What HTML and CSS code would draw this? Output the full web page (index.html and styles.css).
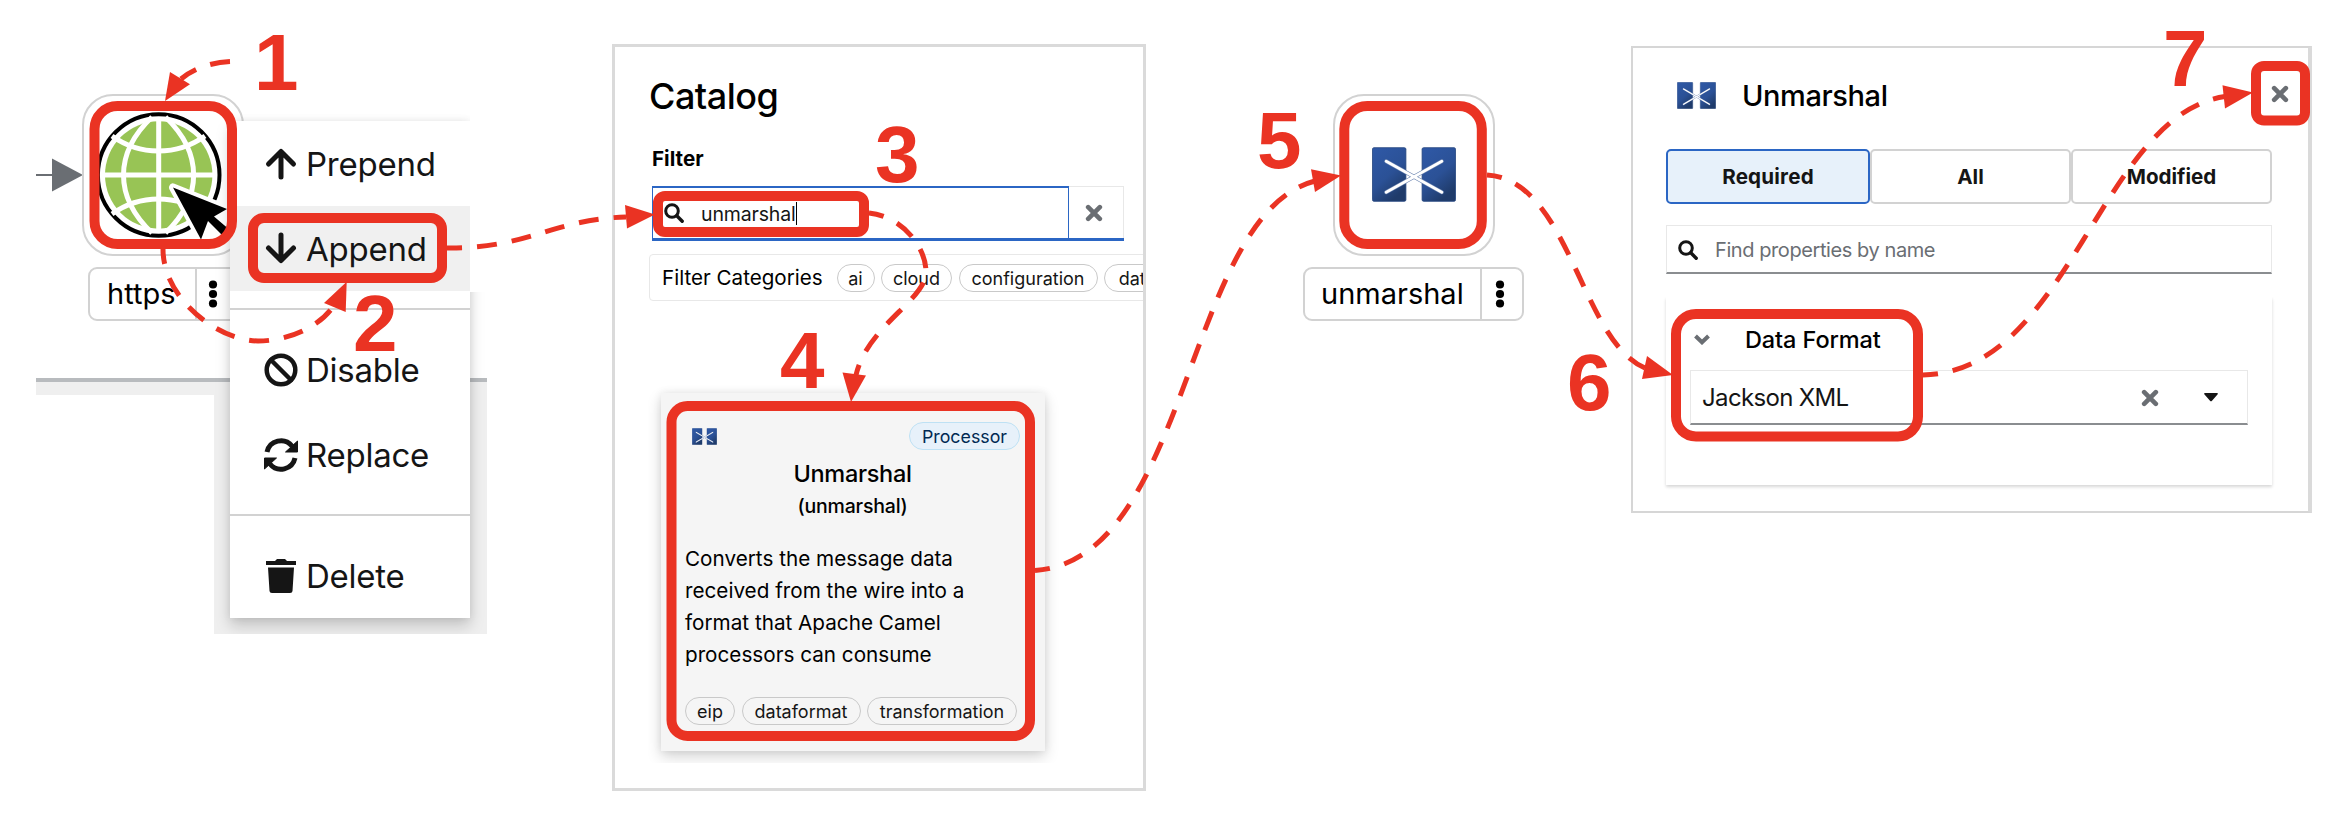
FILE: index.html
```
<!DOCTYPE html>
<html lang="en">
<head>
<meta charset="utf-8">
<title>Add an Unmarshal step</title>
<link rel="stylesheet" href="styles.css">
</head>
<body>
<svg width="0" height="0" class="defs">
  <defs>
    <linearGradient id="blue" x1="0" y1="0" x2="0.55" y2="1">
      <stop offset="0" stop-color="#2f59a7"/><stop offset="0.6" stop-color="#2b5196"/><stop offset="1" stop-color="#1f3b6a"/>
    </linearGradient>
    <symbol id="camel" viewBox="0 0 83 54">
      <rect x="0.5" y="0.5" width="33" height="53" rx="1.5" fill="url(#blue)" stroke="#24457f" stroke-width=".8"/>
      <rect x="49.500" y="0.5" width="33" height="53" rx="1.5" fill="url(#blue)" stroke="#24457f" stroke-width=".8"/>
      <path d="M14 14 69 44.500M14 44.500 69 14" stroke="#6b84b0" stroke-width="4" stroke-linecap="round"/>
      <path d="M14 14 69 44.500M14 44.500 69 14" stroke="#fff" stroke-width="2.800" stroke-linecap="round"/>
    </symbol>
    <symbol id="times" viewBox="0 0 17 17"><path d="M3 3 14 14M14 3 3 14" stroke="currentColor" stroke-width="4.400" stroke-linecap="round"/></symbol>
    <symbol id="search" viewBox="0 0 20 20"><circle cx="8" cy="8" r="6.300" fill="none" stroke="currentColor" stroke-width="3"/><path d="m12.800 12.800 5.400 5.400" stroke="currentColor" stroke-width="3.400" stroke-linecap="round"/></symbol>
    <symbol id="dots" viewBox="0 0 10 28"><circle cx="5" cy="4.500" r="4.100"/><circle cx="5" cy="14" r="4.100"/><circle cx="5" cy="23.500" r="4.100"/></symbol>
  </defs>
</svg>
<main class="canvas">

  <section class="pipeline">
    <div class="lane"></div>
    <div class="lane-bottom"></div>
    <div class="lane-edge"></div>
    <svg class="flow-arrow" width="47" height="34" viewBox="0 0 47 34"><path d="M0 17H17" stroke="#6a6e73" stroke-width="2"/><path d="M16 .5 47 17 16 33.500z" fill="#6a6e73"/></svg>
    <div class="node node-https">
      <svg width="150" height="150" viewBox="84 99 150 150">
        <circle cx="158.700" cy="174" r="60.800" fill="#fff" stroke="#000" stroke-width="4"/>
        <circle cx="158.700" cy="174" r="53.700" fill="#98c455"/>
        <g fill="none" stroke="#fff" stroke-width="5">
          <path d="M158.700 118V230M103 174H215"/>
          <path d="M152 116C114 152 114 196 152 232M165.500 116C203 152 203 196 165.500 232"/>
          <path d="M112 135C140 155 177 155 205 135M112 213C140 193 177 193 205 213"/>
        </g>
        <path d="M173 186.500 201 238 208 221 223 233 230 226 215 215 227 208z" fill="#000" stroke="#fff" stroke-width="8" stroke-linejoin="round"/>
        <path d="M173 186.500 227 208 214 215.500 231 230 224 236 208 220 201 238.500z"/>
      </svg>
    </div>
    <div class="label label-https"><span>https</span><svg width="10" height="28"><use href="#dots"/></svg></div>
    <div class="menu-clip">
      <ul class="menu">
        <li><svg viewBox="0 0 34 34"><path d="M17 30V5M4.500 17 17 4.500 29.500 17" class="ln"/></svg>Prepend</li>
        <li class="active"><svg viewBox="0 0 34 34"><path d="M17 3V28M4.500 16 17 28.500 29.500 16" class="ln"/></svg>Append</li>
        <li class="sep"></li>
        <li><svg viewBox="0 0 34 34"><circle cx="17" cy="17" r="14.300" class="ln thin"/><path d="m7 7 20 20" class="ln thin"/></svg>Disable</li>
        <li><svg viewBox="0 0 34 34"><path d="M3 14A14.300 14.300 0 0 1 28 8M31 20A14.300 14.300 0 0 1 6 26" class="ln flat"/><path d="M33.500 3V14H21.500zM.500 31V20H12.500z" class="tip"/></svg>Replace</li>
        <li class="sep"></li>
        <li><svg viewBox="0 0 34 34"><path d="M2 2H11L13 0H21L23 2H32V6H2zM4 8.500H30L28.500 32Q28.400 34 26 34H8Q5.600 34 5.500 32z"/></svg>Delete</li>
      </ul>
    </div>
  </section>

  <section class="catalog">
    <h1>Catalog</h1>
    <h2>Filter</h2>
    <div class="search">
      <div class="search-input"><svg width="20" height="20"><use href="#search"/></svg><span>unmarshal</span><i></i></div>
      <div class="search-clear"><svg width="18" height="18"><use href="#times"/></svg></div>
    </div>
    <div class="categories"><span class="cat-title">Filter Categories</span><b class="chip c-ai">ai</b><b class="chip c-cloud">cloud</b><b class="chip c-conf">configuration</b><b class="chip c-db">database</b></div>
    <div class="card-clip">
      <article class="card">
        <header><svg width="25" height="17" viewBox="0 0 83 54" preserveAspectRatio="none"><use href="#camel" width="83" height="54"/></svg><b class="chip processor">Processor</b></header>
        <h3>Unmarshal</h3>
        <h4>(unmarshal)</h4>
        <p>Converts the message data<br>received from the wire into a<br>format that Apache Camel<br>processors can consume</p>
        <footer><b class="chip c-eip">eip</b><b class="chip c-data">dataformat</b><b class="chip c-trans">transformation</b></footer>
      </article>
    </div>
  </section>

  <section class="unmarshal">
    <div class="node"><svg width="84" height="55"><use href="#camel"/></svg></div>
    <div class="label"><span>unmarshal</span><svg width="10" height="28"><use href="#dots"/></svg></div>
  </section>

  <section class="config">
    <header><svg width="39" height="27" viewBox="0 0 83 54" preserveAspectRatio="none"><use href="#camel" width="83" height="54"/></svg><h2>Unmarshal</h2><svg class="close" width="18" height="18"><use href="#times"/></svg></header>
    <nav><span class="on">Required</span><span>All</span><span>Modified</span></nav>
    <div class="find"><svg width="20" height="20"><use href="#search"/></svg><span>Find properties by name</span></div>
    <div class="group">
      <div class="group-head"><svg width="16" height="11" viewBox="0 0 16 11"><path d="M1.500 2 8 8.300 14.500 2" fill="none" stroke="#6a6e73" stroke-width="4"/></svg><h3>Data Format</h3></div>
      <div class="select"><span>Jackson XML</span><svg class="x" width="18" height="18"><use href="#times"/></svg><svg width="14" height="9" viewBox="0 0 14 9"><path d="M1 0H13Q14.500 .5 13.500 1.500L8 7.800Q7 8.800 6 7.800L.5 1.500Q-.5 .5 1 0z" fill="#151515"/></svg></div>
    </div>
  </section>

  <svg class="annotations" width="2344" height="828" viewBox="0 0 2344 828">
    <g fill="none" stroke="#ea3323" stroke-width="10">
      <rect x="94.500" y="106" width="137.500" height="138" rx="23"/>
      <rect x="253" y="218" width="189" height="60" rx="11"/>
      <rect x="658" y="196" width="206" height="36" rx="7"/>
      <rect x="671.500" y="406" width="358.500" height="330" rx="16"/>
      <rect x="1344.300" y="106" width="137.500" height="138" rx="23"/>
      <rect x="1676" y="314" width="242" height="122.500" rx="20"/>
      <rect x="2256" y="66" width="49" height="54.500" rx="8"/>
    </g>
    <g fill="none" stroke="#ea3323" stroke-width="5" stroke-dasharray="20 15" stroke-dashoffset="5">
      <path d="M230 61.500C205 62.500 188 73 181 79" stroke-dashoffset="0"/>
      <path d="M163 249C163 300 220 341 258 341C290 341 322 325 334 305"/>
      <path d="M447 248C527 249 553 219 626 217"/>
      <path d="M869 213C901 216 926 246 926 272C926 300 868 325 856 375"/>
      <path d="M1035 570.500C1190 560 1185 215 1315 181"/>
      <path d="M1487 175C1570 180 1580 340 1645 368"/>
      <path d="M1923 375C2070 372 2100 115 2225 96.500"/>
    </g>
    <g fill="#ea3323">
      <path d="M165 101 170 72 190 84.300z"/>
      <path d="M346.700 281.700 324 303 345.700 312z"/>
      <path d="M655 214.500 625 205 627 228.500z"/>
      <path d="M851 402 842.500 372.500 866 375.500z"/>
      <path d="M1341 175.500 1311 169.300 1315 192z"/>
      <path d="M1673 375 1647 356 1642 379z"/>
      <path d="M2253 92.500 2222.500 85.300 2225 108.500z"/>
    </g>
    <g class="steps">
      <text x="254" y="90">1</text>
      <text x="353" y="351">2</text>
      <text x="875" y="182">3</text>
      <text x="780" y="388">4</text>
      <text x="1257" y="168">5</text>
      <text x="1567" y="410">6</text>
      <text x="2163" y="86">7</text>
    </g>
  </svg>
</main>
</body>
</html>
```
FILE: styles.css
```
* { box-sizing: border-box; }
body { margin: 0; background: #fff; font-family: Inter, "Liberation Sans", sans-serif; color: #000; }
h1, h2, h3, h4, p, ul { margin: 0; padding: 0; font-weight: 500; }
svg { display: block; flex: none; }
.defs { position: absolute; }
.canvas { position: relative; width: 2344px; height: 828px; overflow: hidden; }
.pipeline, .catalog, .unmarshal, .config, .annotations { position: absolute; }
.pipeline { left: 0; top: 0; width: 500px; height: 640px; }
.lane, .lane-edge, .lane-bottom, .flow-arrow, .node-https, .label-https, .menu-clip { position: absolute; }
.lane-edge { left: 36px; top: 378px; width: 451px; height: 4px; background: #b8bbbe; }
.lane { left: 36px; top: 382px; width: 178px; height: 13px; background: #efefef; }
.lane-bottom { left: 214px; top: 382px; width: 273px; height: 252px; background: #efefef; }
.flow-arrow { left: 36px; top: 158px; }

.node { width: 162px; height: 162px; border: 2px solid #d2d2d2; border-radius: 31px; background: #fff; display: flex; align-items: center; justify-content: center; }
.node-https { left: 82px; top: 94px; justify-content: flex-start; }
.label { width: 221px; height: 54px; border: 2px solid #d2d2d2; border-radius: 9px; background: #fff; display: flex; align-items: center; font-size: 29px; }
.label span { width: 177px; height: 50px; line-height: 50px; padding-left: 16px; border-right: 2px solid #d2d2d2; }
.label svg { margin-left: 13px; }
.label-https { left: 88px; top: 267px; width: 156px; }
.label-https span { width: 107px; padding-left: 17px; }
.label-https svg { margin-left: 11px; }

.menu-clip { left: 214px; top: 106px; width: 273px; height: 528px; padding: 15px 17px 16px 16px; overflow: hidden; clip-path: polygon(0 0, 256px 0, 256px 186px, 100% 186px, 100% 100%, 0 100%); }
.menu { list-style: none; width: 240px; height: 497px; background: #fff; font-weight: 400; box-shadow: 0 8px 14px rgba(3,3,3,.18), 0 0 8px rgba(3,3,3,.08); }
.menu li { height: 85px; padding-left: 34px; display: flex; align-items: center; gap: 8px; font-size: 33px; letter-spacing: -.25px; color: #151515; }
.menu li svg { width: 34px; height: 34px; fill: #151515; }
.menu .active { background: #f0f0f0; }
.menu .sep { height: 2px; margin: 17px 0; padding: 0; background: #d2d2d2; }
.ln { fill: none; stroke: #151515; stroke-width: 5; stroke-linecap: round; stroke-linejoin: round; }
.ln.thin { stroke-width: 4.500; }
.ln.flat { stroke-linecap: butt; }
.tip { stroke: #151515; stroke-width: 1; stroke-linejoin: round; }

.catalog { left: 612px; top: 44px; width: 534px; height: 747px; border: 3px solid #dadada; overflow: hidden; padding: 24px 0 0 34px; display: flex; flex-direction: column; }
.catalog h1 { font-size: 36px; line-height: 50px; letter-spacing: -.5px; }
.catalog h2 { font-size: 20.600px; font-weight: 700; line-height: 26px; margin: 25px 0 0 3px; }
.search { display: flex; width: 472px; height: 55px; margin: 14px 0 0 3px; border-bottom: 3px solid #2b66c4; }
.search-input { width: 417px; border: 1px solid #2b66c4; border-top-width: 2px; border-bottom: 0; display: flex; align-items: center; padding-left: 11px; font-size: 19.500px; letter-spacing: -.15px; color: #151515; }
.search-input span { margin-left: 17px; padding-top: 1px; }
.search-input i { width: 1px; height: 23px; background: #000; }
.search-clear { flex: 1; border: 1px solid #e8e8e8; border-width: 1px 1px 0 0; display: flex; align-items: center; justify-content: center; padding-right: 4px; color: #6a6e73; }
.categories { margin-top: 13px; width: 640px; height: 47px; border: 1px solid #e8e8e8; border-radius: 4px; display: flex; align-items: center; padding-left: 12px; font-size: 20.600px; gap: 6.500px; flex: none; }
.cat-title { width: 168px; white-space: nowrap; }
.chip { height: 28px; border: 1px solid #c9c9c9; border-radius: 14px; font-weight: 400; font-size: 18px; line-height: 27px; text-align: center; color: #151515; flex: none; }
.c-ai { width: 38px; } .c-cloud { width: 71px; } .c-conf { width: 139px; } .c-db { width: 108px; }
.card-clip { margin: 76px 0 0 -1px; padding: 16px 25px 12px 13px; width: 422px; height: 386px; overflow: hidden; flex: none; }
.card { width: 384px; height: 358px; background: #f5f5f5; box-shadow: 0 6px 14px rgba(3,3,3,.16), 0 0 8px rgba(3,3,3,.08); padding: 29px 25px 0 24px; }
.card header { display: flex; justify-content: space-between; align-items: center; height: 28px; padding-left: 7px; }
.chip.processor { width: 111px; font-size: 17.800px; border-color: #bee1f4; background: #e7f1fa; color: #002952; }
.card h3 { font-size: 23.500px; line-height: 32px; letter-spacing: -.3px; text-align: center; margin-top: 8px; }
.card h4 { font-size: 19.500px; line-height: 28px; letter-spacing: -.2px; text-align: center; margin-top: 2px; }
.card p { font-size: 20.700px; line-height: 32px; font-weight: 400; margin: 23px 0 0 0; white-space: nowrap; }
.card footer { display: flex; gap: 6.500px; margin-top: 26px; }
.c-eip { width: 50px; } .c-data { width: 119px; } .c-trans { width: 150px; }

.unmarshal { left: 1303px; top: 94px; width: 222px; }
.unmarshal .node { margin-left: 30px; margin-bottom: 11px; padding-bottom: 1px; }

.config { left: 1631px; top: 46px; width: 681px; height: 467px; border: 2px solid #d6d6d6; border-right: 4px solid #dadada; padding: 27px 36px 0 33px; }
.config header { display: flex; align-items: center; height: 40px; padding-left: 11px; color: #6a6e73; }
.config header h2 { font-size: 29px; color: #000; margin-left: 26px; flex: 1; letter-spacing: -.4px; }
.close { margin: -2px -17px 0 0; }
.config nav { display: flex; margin-top: 34px; height: 55px; font-size: 20.600px; font-weight: 700; color: #151515; }
.config nav span { flex: 1; border: 2px solid #d2d2d2; border-radius: 5px; display: flex; align-items: center; justify-content: center; }
.config nav .on { border-color: #2b66c4; background: #e7f1fa; flex: 0 0 204px; letter-spacing: .2px; }
.find { display: flex; align-items: center; height: 49px; margin-top: 21px; border: 1px solid #e8e8e8; border-bottom: 2px solid #8a8d90; padding: 1px 0 0 11px; font-size: 20px; letter-spacing: -.42px; color: #6a6e73; }
.find svg { color: #151515; } .find span { margin-left: 17px; }
.group { height: 188px; margin-top: 23px; box-shadow: 0 2px 3px rgba(3,3,3,.16); padding: 25px 24px 0; clip-path: inset(0 -4px -6px -4px); }
.group-head { display: flex; align-items: center; height: 34px; padding-left: 4px; }
.group-head h3 { font-size: 23.500px; letter-spacing: -.1px; margin-left: 35px; padding-top: 1px; }
.select { display: flex; align-items: center; height: 55px; margin-top: 14px; border: 1px solid #e8e8e8; border-bottom: 2px solid #8a8d90; padding: 1px 29px 0 11px; font-size: 24px; letter-spacing: -.65px; color: #151515; }
.select span { flex: 1; }
.select .x { color: #6a6e73; margin-right: 45px; }
.annotations { left: 0; top: 0; }
.steps { font: bold 80px "Liberation Sans", Arial, sans-serif; fill: #ea3323; }
```
